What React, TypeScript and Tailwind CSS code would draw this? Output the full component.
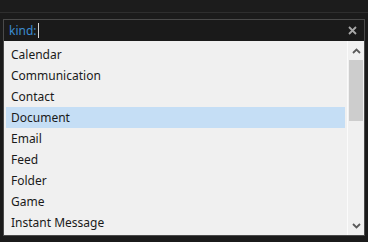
const items = [
  "Calendar",
  "Communication",
  "Contact",
  "Document",
  "Email",
  "Feed",
  "Folder",
  "Game",
  "Instant Message",
];

function Chevron({ up }: { up?: boolean }) {
  return (
    <svg width="9" height="6" viewBox="0 0 9 6" className="block">
      <path
        d={up ? "M1 5 L4.5 1.5 L8 5" : "M1 1 L4.5 4.5 L8 1"}
        fill="none"
        stroke="#5a5a5a"
        strokeWidth="1.8"
      />
    </svg>
  );
}

export default function App() {
  return (
    <div
      className="relative h-[242px] w-[368px] overflow-hidden bg-[#1b1b1b]"
      style={{ fontFamily: '"Noto Sans", "Open Sans", sans-serif' }}
    >
      <div className="h-[13px] border-b border-[#2e2e2e] bg-[#1c1c1c]" />
      <div className="px-[3px] pt-[6px]">
        <div className="w-[362px] border border-[#4a4a4a] bg-[#1a1a1a]">
          <div className="flex h-[21px] items-center justify-between pl-[5px] pr-[7px]">
            <div className="flex items-center text-[12px] text-[#3b8bd0]">
              kind:
              <span className="ml-[1px] inline-block h-[15px] w-[1px] bg-[#d8d8d8]" />
            </div>
            <svg width="9" height="9" viewBox="0 0 9 9">
              <path d="M1 1 L8 8 M8 1 L1 8" stroke="#a8a8a8" strokeWidth="1.8" />
            </svg>
          </div>
          <div className="flex h-[194px] bg-[#f0f0f0]">
            <div className="flex-1 pl-[2px] pr-[2px] pt-[3px]">
              {items.map((it) => (
                <div
                  key={it}
                  className={`flex h-[21px] items-center pl-[5px] text-[12px] text-[#1a1a1a] ${
                    it === "Document" ? "bg-[#c5def5]" : ""
                  }`}
                >
                  {it}
                </div>
              ))}
            </div>
            <div className="flex w-[17px] flex-col border-l border-[#fbfbfb] bg-[#f0f0f0]">
              <div className="flex h-[19px] items-center justify-center">
                <Chevron up />
              </div>
              <div className="mx-[1px] h-[61px] bg-[#cdcdcd]" />
              <div className="flex-1" />
              <div className="flex h-[19px] items-center justify-center">
                <Chevron />
              </div>
            </div>
          </div>
        </div>
      </div>
    </div>
  );
}
